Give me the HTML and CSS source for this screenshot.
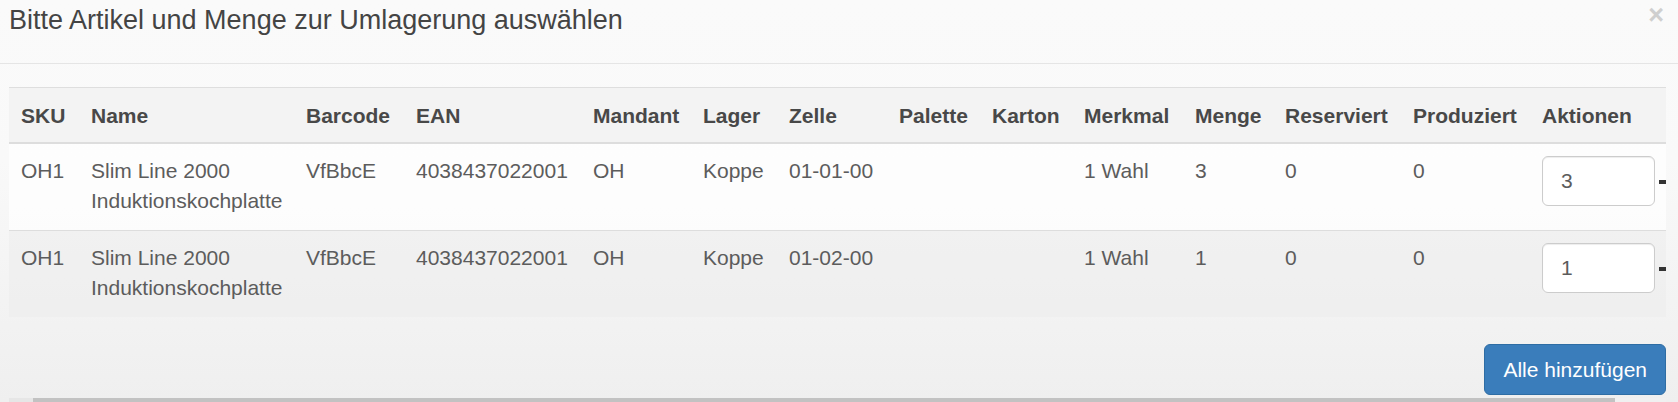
FILE: index.html
```html
<!DOCTYPE html>
<html lang="de">
<head>
<meta charset="utf-8">
<title>Umlagerung</title>
<link rel="stylesheet" href="styles.css">
</head>
<body>
<div class="modal">
  <div class="modal-header">
    <h4 class="modal-title">Bitte Artikel und Menge zur Umlagerung auswählen</h4>
    <button class="close" type="button">×</button>
  </div>
  <div class="modal-body">
    <div class="table-wrap">
      <table class="table">
        <colgroup>
          <col class="c-sku"><col class="c-name"><col class="c-barcode"><col class="c-ean"><col class="c-mandant"><col class="c-lager"><col class="c-zelle"><col class="c-palette"><col class="c-karton"><col class="c-merkmal"><col class="c-menge"><col class="c-res"><col class="c-prod"><col class="c-akt">
        </colgroup>
        <thead>
          <tr>
            <th>SKU</th><th>Name</th><th>Barcode</th><th>EAN</th><th>Mandant</th><th>Lager</th><th>Zelle</th><th>Palette</th><th>Karton</th><th>Merkmal</th><th>Menge</th><th>Reserviert</th><th>Produziert</th><th>Aktionen</th>
          </tr>
        </thead>
        <tbody>
          <tr class="row-a">
            <td>OH1</td><td>Slim Line 2000 Induktionskochplatte</td><td>VfBbcE</td><td>4038437022001</td><td>OH</td><td>Koppe</td><td>01-01-00</td><td></td><td></td><td>1 Wahl</td><td>3</td><td>0</td><td>0</td>
            <td><div class="actions"><input class="qty" type="text" value="3"><span class="minus"></span></div></td>
          </tr>
          <tr class="row-b">
            <td>OH1</td><td>Slim Line 2000 Induktionskochplatte</td><td>VfBbcE</td><td>4038437022001</td><td>OH</td><td>Koppe</td><td>01-02-00</td><td></td><td></td><td>1 Wahl</td><td>1</td><td>0</td><td>0</td>
            <td><div class="actions"><input class="qty" type="text" value="1"><span class="minus"></span></div></td>
          </tr>
        </tbody>
      </table>
    </div>
    <div class="footer">
      <button class="btn-primary" type="button">Alle hinzufügen</button>
    </div>
    <div class="scrollbar">
      <div class="scroll-arrow"></div>
      <div class="scroll-thumb"></div>
    </div>
  </div>
</div>
</body>
</html>
```

FILE: styles.css
```css
html, body {
  margin: 0;
  padding: 0;
}
body {
  width: 1678px;
  height: 402px;
  overflow: hidden;
  font-family: "Liberation Sans", Arial, sans-serif;
  color: #333;
  background: linear-gradient(180deg, #fafafa 0%, #f9f9f9 40%, #f3f3f3 75%, #efefef 100%);
}
.modal {
  width: 1678px;
}
.modal-header {
  display: flex;
  justify-content: space-between;
  align-items: flex-start;
  height: 30px;
  padding: 5px 14px 28px 9px;
  border-bottom: 1px solid #e5e5e5;
}
.modal-title {
  margin: 0;
  font-size: 27px;
  line-height: 30px;
  font-weight: normal;
  color: #444;
}
.close {
  margin-top: -3px;
  padding: 0;
  border: 0;
  background: transparent;
  font-family: "Liberation Sans", Arial, sans-serif;
  font-size: 27px;
  line-height: 27px;
  font-weight: bold;
  color: #cfcfcf;
}
.modal-body {
  padding: 23px 12px 0 9px;
}
.table-wrap {
  width: 1657px;
  overflow: hidden;
}
.table {
  width: 1711px;
  table-layout: fixed;
  border-collapse: collapse;
  border-spacing: 0;
  font-size: 21px;
  line-height: 30px;
}
.c-sku { width: 70px; }
.c-name { width: 215px; }
.c-barcode { width: 110px; }
.c-ean { width: 177px; }
.c-mandant { width: 110px; }
.c-lager { width: 86px; }
.c-zelle { width: 110px; }
.c-palette { width: 93px; }
.c-karton { width: 92px; }
.c-merkmal { width: 111px; }
.c-menge { width: 90px; }
.c-res { width: 128px; }
.c-prod { width: 129px; }
.c-akt { width: 190px; }
.table thead tr {
  background: #f3f3f3;
  border-top: 1px solid #dedede;
}
.table th {
  text-align: left;
  vertical-align: bottom;
  padding: 13px 12px 11px;
  font-weight: bold;
  color: #484848;
  border-bottom: 2px solid #dddddd;
  white-space: nowrap;
}
.table td {
  vertical-align: top;
  padding: 12px 12px 14px;
  color: #5c5c5c;
  border-top: 1px solid #dddddd;
}
.row-a {
  background: rgba(255, 255, 255, 0.7);
}
.row-b {
  background: rgba(236, 236, 236, 0.45);
}
.actions {
  display: flex;
  align-items: center;
  gap: 4px;
}
.qty {
  box-sizing: border-box;
  flex: none;
  width: 113px;
  height: 50px;
  padding: 0 18px;
  border: 1px solid #cccccc;
  border-radius: 6px;
  background: #fff;
  box-shadow: inset 0 1px 1px rgba(0, 0, 0, 0.075);
  font-family: "Liberation Sans", Arial, sans-serif;
  font-size: 21px;
  color: #5c5c5c;
}
.minus {
  flex: none;
  width: 8px;
  height: 4px;
  margin-top: 2px;
  background: #333;
}
.footer {
  display: flex;
  justify-content: flex-end;
  margin-top: 27px;
}
.btn-primary {
  height: 51px;
  padding: 0 18px;
  border: 1px solid #2e6da4;
  border-radius: 6px;
  background: #3a7dbb;
  color: #fff;
  font-family: "Liberation Sans", Arial, sans-serif;
  font-size: 21px;
  line-height: 30px;
}
.scrollbar {
  display: flex;
  height: 17px;
  margin-top: 3px;
  background: #f0f0f0;
}
.scroll-arrow {
  width: 24px;
  background: #e6e6e6;
}
.scroll-thumb {
  width: 1582px;
  background: #c2c2c2;
}
```
